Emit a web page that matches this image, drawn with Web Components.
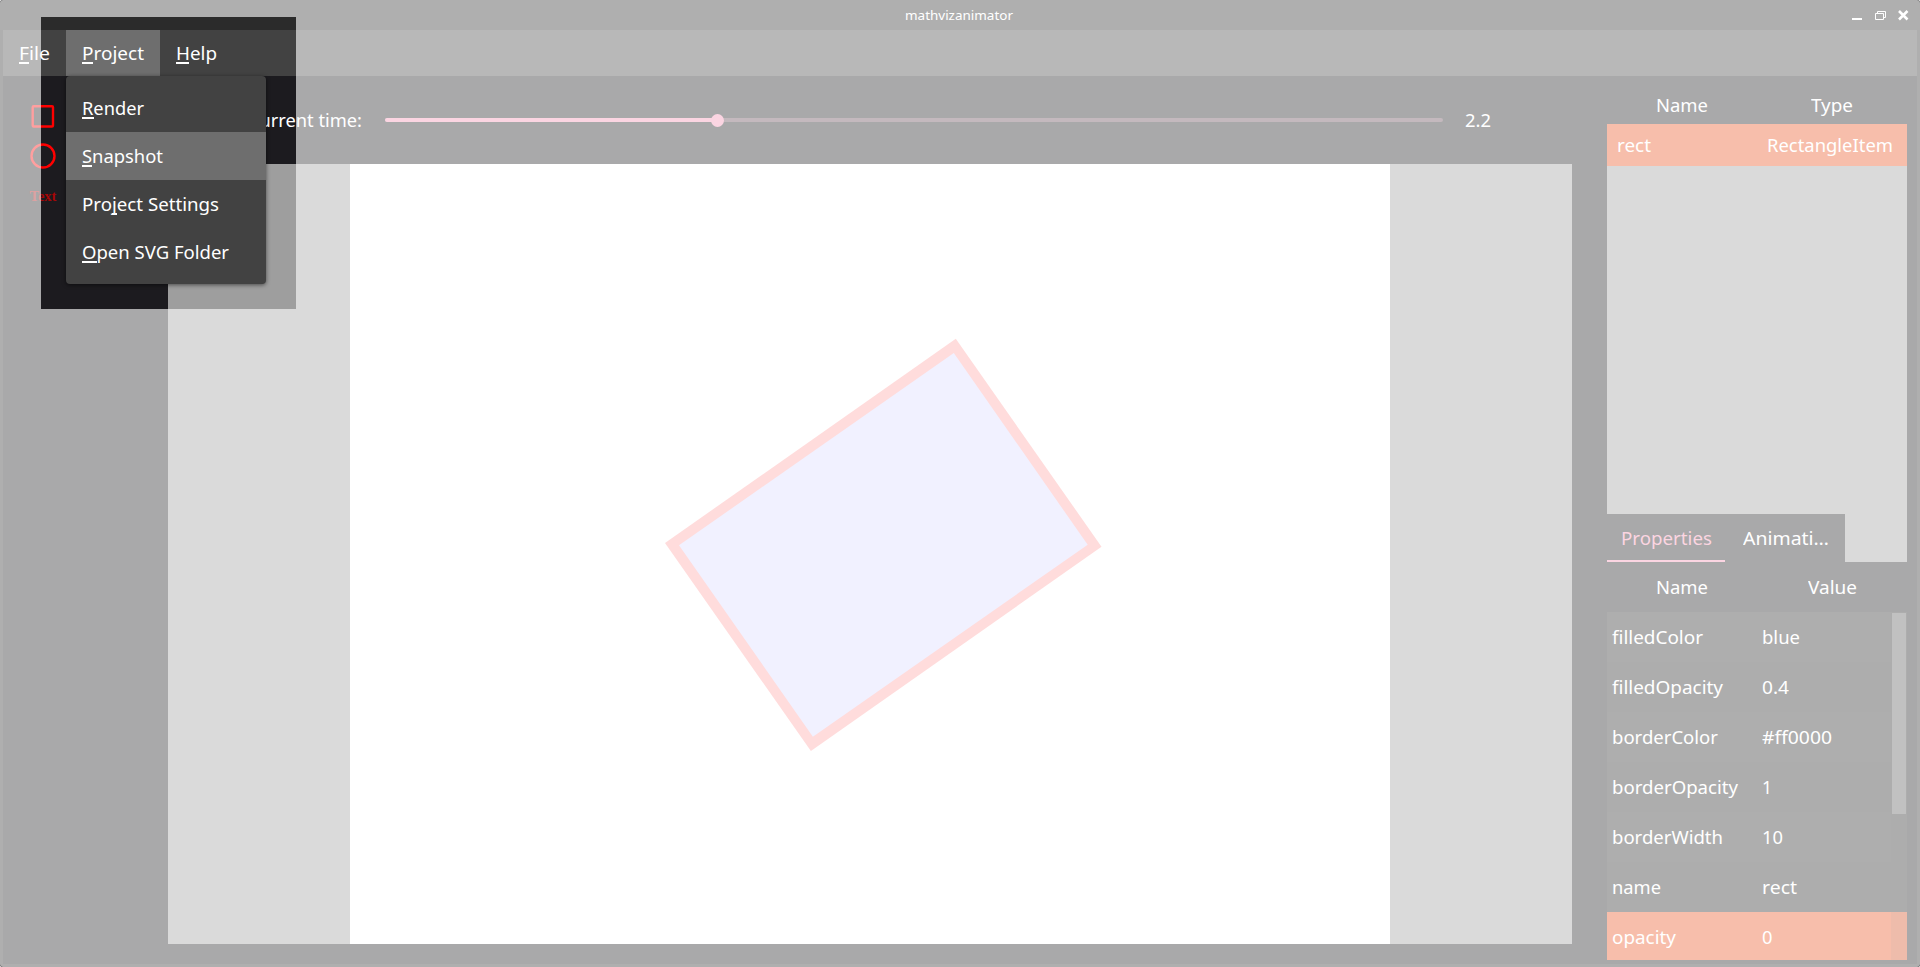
<!DOCTYPE html>
<html lang="en"><head><meta charset="utf-8"><title>mathvizanimator</title>
<style>
html,body{margin:0;width:1920px;height:967px;overflow:hidden;background:#fff}
</style></head><body>
<app-window></app-window>
<script>
const make=(name,html,init)=>customElements.define(name,class extends HTMLElement{
  connectedCallback(){ if(this.shadowRoot)return; const r=this.attachShadow({mode:'open'});
    r.innerHTML=typeof html==='function'?html(this):html; if(init)init(this,r); }
});

/* One-line label condensed to the advance width given in "w"; "mn" is the mnemonic's "start,width". */
make('ui-label',el=>{
  const mn=(el.getAttribute('mn')||'').split(',');
  return `<style>:host{display:block;position:relative;white-space:nowrap;line-height:26px;height:26px;width:${el.getAttribute('w')}px}
  span{display:inline-block;transform-origin:0 50%}
  i{position:absolute;left:${mn[0]||0}px;width:${mn[1]||0}px;top:22px;height:2px;background:#fff}</style><span><slot></slot></span>${mn[1]?'<i></i>':''}`},
  (el,r)=>{const s=r.querySelector('span');const n=s.offsetWidth?s.getBoundingClientRect().width:0;
    if(n)s.style.transform=`scaleX(${(+el.getAttribute('w'))/n})`;});

make('title-bar',`<style>:host{display:grid;grid-template-columns:1fr auto 1fr;height:30px;align-items:center;background:#2b2b2b;font-size:13px}
svg{justify-self:end;margin-right:9px}ui-label{margin:0 2px 1px 0}</style>
<b></b><ui-label w="108">mathvizanimator</ui-label>
<svg width="62" height="30" fill="none" stroke="#fff"><path d="M3 19h10" stroke-width="2"/><path d="M28.500 13.500v-2h8v6h-2M26.500 13.500h8v6h-8z"/><path d="M50 11l8.500 8.500M58.500 11l-8.500 8.500" stroke-width="2.600"/></svg>`);

make('menu-bar',`<style>:host{display:flex;height:46px;background:#424242;position:relative}
.m{display:flex;align-items:center;padding:0 15px 0 16px}.on{background:#6e6e6e}</style>
<div class="m" style="width:32px"><ui-label w="31" mn="0,10">File</ui-label></div>
<div class="m on" style="width:63px"><ui-label w="62" mn="0,11">Project</ui-label></div>
<div class="m"><ui-label w="41" mn="0,13">Help</ui-label></div>`);

make('drop-menu',`<style>:host{display:flex;flex-direction:column;position:absolute;left:66px;top:76px;width:200px;height:208px;box-sizing:border-box;padding:8px 0;border-radius:4px;background:#424242;box-shadow:0 1px 4px #0008}
div{height:48px;display:flex;align-items:center;padding-left:16px}.on{background:#6e6e6e}</style>
<div><ui-label w="62" mn="0,12">Render</ui-label></div>
<div class="on"><ui-label w="81" mn="0,10">Snapshot</ui-label></div>
<div><ui-label w="137" mn="30,5">Project Settings</ui-label></div>
<div><ui-label w="147" mn="0,15">Open SVG Folder</ui-label></div>`);

make('tool-box',`<style>:host{display:flex;flex-direction:column;align-items:center;width:80px;padding-top:27px;box-sizing:border-box}
svg{display:block}.t{font:bold 14.500px/16px "Liberation Serif",serif;color:#a60606;margin-top:18px}</style>
<svg width="28" height="28" fill="none" stroke="#f00" stroke-width="2.400"><rect x="3.700" y="3.200" width="20.300" height="20.300" rx="1"/></svg>
<svg width="28" height="28" style="margin-top:11px" fill="none" stroke="#f00" stroke-width="2.400"><circle cx="14" cy="14" r="11.500"/></svg>
<div class="t">Text</div>`);

make('time-slider',`<style>:host{display:flex;align-items:center;height:88px;padding-left:80px}
.s{width:1058px;height:4px;margin:0 22px 0 24px;border-radius:2px;background:#634552;display:flex;align-items:center}
.f{width:333px;height:4px;border-radius:2px;background:#f48fb1}.k{width:13px;height:13px;border-radius:50%;background:#f48fb1;margin-left:-7px}</style>
<ui-label w="114" style="margin-right:-1px">Current time:</ui-label><div class="s"><div class="f"></div><div class="k"></div></div><ui-label w="26">2.2</ui-label>`);

make('draw-canvas',`<style>:host{display:flex;justify-content:center;width:1404px;height:780px;background:#9e9e9e}svg{display:block;background:#fff}</style>
<svg width="1040" height="780" viewBox="350 164 1040 780">
<path d="M955.800 338.800L1101.500 546.700 810.900 751 665 543z" fill="#ffa2a2"/><path d="M953.800 353L1087.700 544.800 812.900 736.700 679 545.300z" fill="#dadaff"/></svg>`);

make('item-list',`<style>:host{display:block;height:438px}
.h{display:grid;grid-template-columns:150px 150px;justify-items:center;align-items:center;height:38px;padding-top:10px;box-sizing:content-box}
.r{display:flex;align-items:center;height:42px;background:#e95420;padding-left:10px}.r :first-child{margin-right:116px}
.e{height:348px;background:#9e9e9e}</style>
<div class="h"><ui-label w="52">Name</ui-label><ui-label w="42">Type</ui-label></div>
<div class="r"><ui-label w="34">rect</ui-label><ui-label w="126">RectangleItem</ui-label></div><div class="e"></div>`);

make('tab-strip',`<style>:host{display:flex;height:48px;background:#9e9e9e}
div{height:48px;box-sizing:border-box;display:flex;align-items:center;justify-content:center;background:#1c1b1f;width:120px;padding-left:1px}
.on{width:118px;color:#f48fb1;padding:2px 0 0;border-bottom:2px solid #f48fb1}</style>
<div class="on"><ui-label w="91">Properties</ui-label></div><div><ui-label w="86">Animati…</ui-label></div>`);

const rows=[['filledColor',91,'blue',38],['filledOpacity',111,'0.4',27],['borderColor',106,'#ff0000',70],['borderOpacity',126,'1',10],['borderWidth',111,'10',21],['name',49,'rect',35],['opacity',64,'0',10.5]];
make('prop-table',`<style>:host{display:block;position:relative}
.h{display:grid;grid-template-columns:150px 150px;justify-items:center;align-items:center;height:50px}
.b{height:348px;overflow:hidden;background:#282828}
.r{display:grid;grid-template-columns:150px 150px;align-items:center;height:50px;padding-left:4.500px}
.r:nth-child(even){background:#262626}.r.on{background:#e95420}
.sb{position:absolute;left:284px;top:50px;width:16px;height:348px;background:#2828281c}.sb div{width:14px;height:201px;margin:1px;background:#5c5c5c}</style>
<div class="h"><ui-label w="52">Name</ui-label><ui-label w="49">Value</ui-label></div>
<div class="b">${rows.map((r,i)=>`<div class="r ${i==6?'on':''}"><ui-label w="${r[1]}">${r[0]}</ui-label><ui-label w="${r[3]}">${r[2]}</ui-label></div>`).join('')}</div>
<div class="sb"><div></div></div>`);

/* Translucent veil with a clear window around the open menu. */
make('focus-veil',`<style>:host{position:absolute;inset:0;background:rgba(255,255,255,.625);clip-path:path(evenodd,"M0 0H1920V967H0ZM41 17H296V309H41Z")}</style>`);

make('app-window',`<style>:host{display:flex;flex-direction:column;position:relative;width:1920px;height:967px;border-radius:3px;overflow:hidden;background:#1c1b1f;color:#fff;font:18.600px "Noto Sans",sans-serif}
.c{height:934px;border:solid #2b2b2b;border-width:0 3px 3px;display:flex;flex-direction:column}
.m{display:flex;height:888px}.w{width:1439px;margin-left:85px}.side{width:300px}</style>
<title-bar></title-bar><div class="c"><menu-bar></menu-bar><div class="m"><tool-box></tool-box>
<div class="w"><time-slider></time-slider><draw-canvas></draw-canvas></div>
<div class="side"><item-list></item-list><tab-strip></tab-strip><prop-table></prop-table></div></div></div>
<drop-menu></drop-menu><focus-veil></focus-veil>`);
</script></body></html>
